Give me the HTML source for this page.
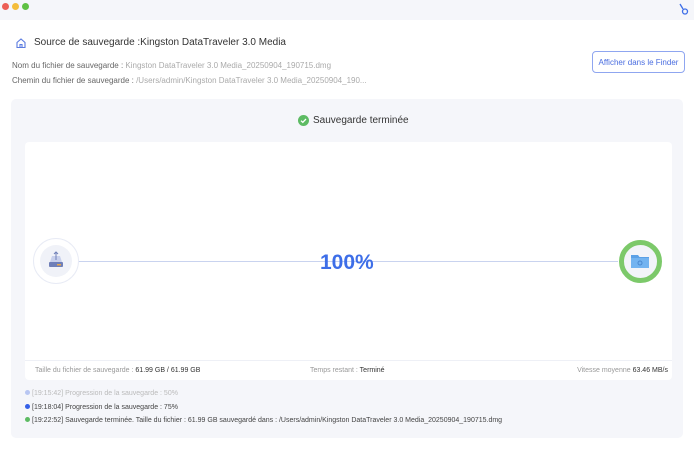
<!DOCTYPE html>
<html><head><meta charset="utf-8"><style>
*{margin:0;padding:0;box-sizing:border-box}
body{width:694px;height:450px;background:#fff;font-family:"Liberation Sans",sans-serif;position:relative;overflow:hidden;color:#333}
.a{position:absolute;white-space:nowrap}
</style></head><body>
<div class="a" style="left:0;top:0;width:694px;height:20px;background:#f5f6fa"></div>
<div class="a" style="left:2px;top:3px;width:7px;height:7px;border-radius:50%;background:#ec5f56"></div>
<div class="a" style="left:12px;top:3px;width:7px;height:7px;border-radius:50%;background:#f4bd3b"></div>
<div class="a" style="left:22px;top:3px;width:7px;height:7px;border-radius:50%;background:#5fc144"></div>
<svg class="a" style="left:678px;top:3px" width="12" height="12" viewBox="0 0 12 12"><path d="M2 1 L5 6" stroke="#3d6ee8" stroke-width="1.3" fill="none"/><circle cx="7" cy="8.5" r="2.5" stroke="#3d6ee8" stroke-width="1.3" fill="none"/></svg>
<svg class="a" style="left:15px;top:37px" width="12" height="12" viewBox="0 0 12 12"><path d="M2 5.5 L6 2 L10 5.5 V10.5 H2 Z M5 10.5 V7.5 H7 V10.5" stroke="#5b7be0" stroke-width="1.1" fill="none"/></svg>
<div class="a" style="left:34px;top:37px;font-size:10px;color:#333">Source de sauvegarde :Kingston DataTraveler 3.0 Media</div>
<div class="a" style="left:12px;top:61px;font-size:8px;color:#666">Nom du fichier de sauvegarde : <span style="color:#aaa">Kingston DataTraveler 3.0 Media_20250904_190715.dmg</span></div>
<div class="a" style="left:12px;top:76px;font-size:8px;color:#666">Chemin du fichier de sauvegarde : <span style="color:#aaa">/Users/admin/Kingston DataTraveler 3.0 Media_20250904_190...</span></div>
<div class="a" style="left:592px;top:51px;width:93px;height:22px;border:1px solid #8fa6f0;border-radius:4px;font-size:8px;color:#4a6de0;display:flex;align-items:center;justify-content:center">Afficher dans le Finder</div>
<div class="a" style="left:11px;top:99px;width:672px;height:339px;background:#f5f6fa;border-radius:5px"></div>
<svg class="a" style="left:298px;top:115px" width="11" height="11" viewBox="0 0 11 11"><circle cx="5.5" cy="5.5" r="5.5" fill="#5dbb63"/><path d="M3 5.7 L4.8 7.3 L8 4" stroke="#fff" stroke-width="1.3" fill="none"/></svg>
<div class="a" style="left:313px;top:115px;font-size:10px;color:#333">Sauvegarde terminée</div>
<div class="a" style="left:25px;top:142px;width:647px;height:238px;background:#fff;border-radius:4px"></div>
<div class="a" style="left:25px;top:360px;width:647px;height:1px;background:#eef0f6"></div>
<div class="a" style="left:78px;top:261px;width:540px;height:1px;background:#c9d3ef"></div>
<div class="a" style="left:33px;top:238px;width:46px;height:46px;border-radius:50%;border:1px solid #e8ebf5;background:#fff"></div>
<div class="a" style="left:40px;top:245px;width:32px;height:32px;border-radius:50%;background:#f0f2f8"></div>
<svg class="a" style="left:46px;top:250px" width="20" height="20" viewBox="0 0 20 20"><rect x="3" y="12" width="14" height="5" rx="1" fill="#6f7fb8"/><path d="M4 12 L6 6 H14 L16 12Z" fill="#c8d0ec"/><rect x="11" y="14" width="4" height="1.5" fill="#e9a84a"/><path d="M10 2 V10 M8 4 L10 2 L12 4" stroke="#6f7fb8" stroke-width="1" fill="none"/></svg>
<div class="a" style="left:619px;top:240px;width:43px;height:43px;border-radius:50%;border:5px solid #7cc96a;background:#f2f4f9"></div>
<svg class="a" style="left:630px;top:251px" width="20" height="20" viewBox="0 0 20 20"><path d="M1 4 H8 L9.5 6 H19 V17 H1Z" fill="#5aa0e6"/><rect x="1" y="7" width="18" height="10" fill="#72b3f0"/><circle cx="10" cy="12" r="2" stroke="#4a88cf" fill="none"/></svg>
<div class="a" style="left:320px;top:251px;font-size:21px;font-weight:bold;color:#3d6ee8">100%</div>
<div class="a" style="left:35px;top:367px;font-size:7px;color:#999">Taille du fichier de sauvegarde : <span style="color:#333">61.99 GB / 61.99 GB</span></div>
<div class="a" style="left:310px;top:367px;font-size:7px;color:#999">Temps restant : <span style="color:#333">Terminé</span></div>
<div class="a" style="right:26px;top:367px;font-size:7px;color:#999">Vitesse moyenne <span style="color:#333">63.46 MB/s</span></div>
<div class="a" style="left:25px;top:390px;font-size:7px;color:#bbb"><span style="display:inline-block;width:5px;height:5px;border-radius:50%;background:#b8c6f2;margin-right:2px"></span>[19:15:42] Progression de la sauvegarde : 50%</div>
<div class="a" style="left:25px;top:404px;font-size:7px;color:#444"><span style="display:inline-block;width:5px;height:5px;border-radius:50%;background:#3560e8;margin-right:2px"></span>[19:18:04] Progression de la sauvegarde : 75%</div>
<div class="a" style="left:25px;top:417px;font-size:7px;color:#444"><span style="display:inline-block;width:5px;height:5px;border-radius:50%;background:#5dbb63;margin-right:2px"></span>[19:22:52] Sauvegarde terminée. Taille du fichier : 61.99 GB sauvegardé dans : /Users/admin/Kingston DataTraveler 3.0 Media_20250904_190715.dmg</div>
</body></html>
